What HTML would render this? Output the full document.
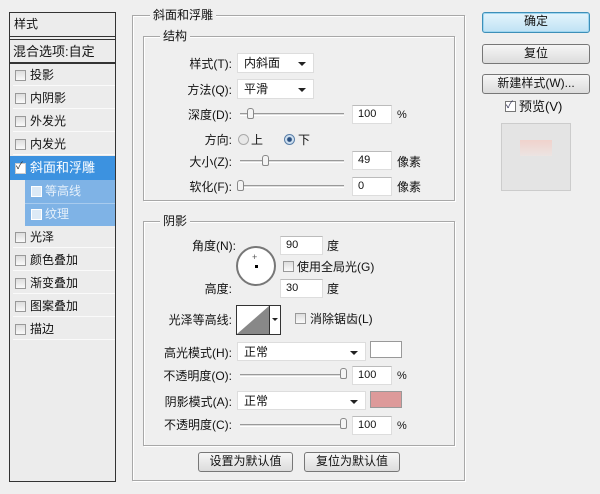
<!DOCTYPE html>
<html><head><meta charset="utf-8"><style>
*{margin:0;padding:0;box-sizing:border-box}
body{width:600px;height:494px;background:#efefef;position:relative;overflow:hidden;font-family:"Liberation Sans","Noto Sans CJK SC",sans-serif;font-size:12px;color:#111}
.a{position:absolute}
.lbl{position:absolute;text-align:right;white-space:nowrap;line-height:14px}
.t{position:absolute;white-space:nowrap;line-height:14px}
.grp{position:absolute;border:1px solid #a8a8a8;box-shadow:inset 1px 1px 0 #fff,1px 1px 0 #fff}
.gt{position:absolute;background:#efefef;padding:0 3px;line-height:14px;font-size:12px}
.dd{position:absolute;background:#fff;border:1px solid #ddd;padding-left:6px;line-height:18px}
.dd:after{content:"";position:absolute;right:7px;top:8px;border:4px solid transparent;border-top:4px solid #222;border-bottom:0}
.inp{position:absolute;background:#fff;border:1px solid #ddd;border-top-color:#bbb;padding-left:5px;line-height:16px;font-size:11px;height:19px}
.trk{position:absolute;height:3px;border-top:1px solid #999;border-bottom:1px solid #fff;background:#ddd}
.th{position:absolute;width:7px;height:11px;background:#f4f4f4;border:1px solid #888;border-radius:3px 3px 2px 2px}
.cb{position:absolute;width:11px;height:11px;border:1px solid #999;background:linear-gradient(#ddd,#fafafa)}
.li{position:absolute;left:13px;height:22px;line-height:22px;width:102px;border-bottom:1px solid #fafafa}
.li .cb{left:2px;top:6px}
.li span{position:absolute;left:17px}
.btn{position:absolute;border:1px solid #777;border-radius:3px;background:linear-gradient(#f6f6f6,#dcdcdc);text-align:center;line-height:17px;font-size:12px}
</style></head><body>
<!-- left panel -->
<div class="a" style="left:9px;top:12px;width:107px;height:470px;border:1px solid #333;background:#ececec"></div>
<div class="t" style="left:14px;top:17px">样式</div>
<div class="a" style="left:10px;top:36px;width:105px;height:4px;border-top:1px solid #333;border-bottom:1px solid #333"></div>
<div class="t" style="left:13px;top:45px;font-size:13px">混合选项:自定</div>
<div class="a" style="left:10px;top:62px;width:105px;border-top:2px solid #333"></div>
<div class="li" style="top:64px"><div class="cb"></div><span>投影</span></div>
<div class="li" style="top:87px"><div class="cb"></div><span>内阴影</span></div>
<div class="li" style="top:110px"><div class="cb"></div><span>外发光</span></div>
<div class="li" style="top:133px"><div class="cb"></div><span>内发光</span></div>
<div class="a" style="left:10px;top:156px;width:105px;height:24px;background:#3c92e0"></div>
<div class="cb" style="left:15px;top:163px;background:#fff;border-color:#ccc"></div>
<div class="t" style="left:16px;top:160px;font-size:10px;color:#333">✓</div>
<div class="t" style="left:30px;top:161px;color:#fff;font-size:13px">斜面和浮雕</div>
<div class="a" style="left:25px;top:180px;width:90px;height:46px;background:#7fb3e6"></div>
<div class="a" style="left:25px;top:203px;width:90px;border-top:1px solid #a8cbee"></div>
<div class="cb" style="left:31px;top:186px;background:#ddeaf6;border-color:#fff"></div>
<div class="t" style="left:45px;top:184px;color:#e6f0fa">等高线</div>
<div class="cb" style="left:31px;top:209px;background:#ddeaf6;border-color:#fff"></div>
<div class="t" style="left:45px;top:207px;color:#e6f0fa">纹理</div>
<div class="li" style="top:226px"><div class="cb"></div><span>光泽</span></div>
<div class="li" style="top:249px"><div class="cb"></div><span>颜色叠加</span></div>
<div class="li" style="top:272px"><div class="cb"></div><span>渐变叠加</span></div>
<div class="li" style="top:295px"><div class="cb"></div><span>图案叠加</span></div>
<div class="li" style="top:318px"><div class="cb"></div><span>描边</span></div>

<!-- main group -->
<div class="grp" style="left:132px;top:15px;width:333px;height:466px"></div>
<div class="gt" style="left:150px;top:8px">斜面和浮雕</div>
<div class="grp" style="left:143px;top:36px;width:312px;height:165px"></div>
<div class="gt" style="left:160px;top:29px">结构</div>

<div class="lbl" style="right:368px;top:57px">样式(T):</div>
<div class="dd" style="left:237px;top:53px;width:77px;height:20px">内斜面</div>
<div class="lbl" style="right:368px;top:83px">方法(Q):</div>
<div class="dd" style="left:237px;top:79px;width:77px;height:20px">平滑</div>
<div class="lbl" style="right:368px;top:108px">深度(D):</div>
<div class="trk" style="left:240px;top:113px;width:104px"></div><div class="th" style="left:247px;top:108px"></div>
<div class="inp" style="left:352px;top:105px;width:40px">100</div><div class="t" style="left:397px;top:108px;font-size:11px">%</div>
<div class="lbl" style="right:368px;top:133px">方向:</div>
<div class="a" style="left:238px;top:134px;width:11px;height:11px;border-radius:50%;border:1px solid #aaa;background:#e8e8e8"></div>
<div class="t" style="left:251px;top:133px">上</div>
<div class="a" style="left:284px;top:134px;width:11px;height:11px;border-radius:50%;border:1px solid #5a7fa8;background:radial-gradient(#2a4f80 30%,#cfe0f0 45%)"></div>
<div class="t" style="left:298px;top:133px">下</div>
<div class="lbl" style="right:368px;top:155px">大小(Z):</div>
<div class="trk" style="left:240px;top:160px;width:104px"></div><div class="th" style="left:262px;top:155px"></div>
<div class="inp" style="left:352px;top:151px;width:40px">49</div><div class="t" style="left:397px;top:155px">像素</div>
<div class="lbl" style="right:368px;top:180px">软化(F):</div>
<div class="trk" style="left:240px;top:185px;width:104px"></div><div class="th" style="left:237px;top:180px"></div>
<div class="inp" style="left:352px;top:177px;width:40px">0</div><div class="t" style="left:397px;top:180px">像素</div>

<div class="grp" style="left:143px;top:221px;width:312px;height:225px"></div>
<div class="gt" style="left:160px;top:214px">阴影</div>
<div class="lbl" style="right:364px;top:239px">角度(N):</div>
<div class="a" style="left:236px;top:246px;width:40px;height:40px;border-radius:50%;border:2px solid #777;background:#fff"></div>
<div class="t" style="left:252px;top:250px;font-size:9px;color:#555">+</div>
<div class="a" style="left:255px;top:265px;width:3px;height:3px;background:#000"></div>
<div class="inp" style="left:280px;top:236px;width:43px">90</div><div class="t" style="left:327px;top:239px">度</div>
<div class="cb" style="left:283px;top:261px"></div><div class="t" style="left:297px;top:260px">使用全局光(G)</div>
<div class="lbl" style="right:368px;top:282px">高度:</div>
<div class="inp" style="left:280px;top:279px;width:43px">30</div><div class="t" style="left:327px;top:282px">度</div>
<div class="lbl" style="right:368px;top:313px">光泽等高线:</div>
<div class="a" style="left:236px;top:305px;width:45px;height:30px;border:1px solid #333;background:#fff"></div>
<svg class="a" style="left:237px;top:306px" width="32" height="28"><polygon points="0,28 32,0 32,28" fill="#888"/></svg>
<div class="a" style="left:269px;top:306px;width:1px;height:28px;background:#333"></div>
<div class="a" style="left:272px;top:318px;border:3px solid transparent;border-top:3px solid #222"></div>
<div class="cb" style="left:295px;top:313px"></div><div class="t" style="left:310px;top:312px">消除锯齿(L)</div>
<div class="lbl" style="right:368px;top:346px">高光模式(H):</div>
<div class="dd" style="left:237px;top:342px;width:129px;height:19px">正常</div>
<div class="a" style="left:370px;top:341px;width:32px;height:17px;border:1px solid #999;background:#fff"></div>
<div class="lbl" style="right:368px;top:369px">不透明度(O):</div>
<div class="trk" style="left:240px;top:374px;width:104px"></div><div class="th" style="left:340px;top:368px"></div>
<div class="inp" style="left:352px;top:366px;width:40px">100</div><div class="t" style="left:397px;top:369px;font-size:11px">%</div>
<div class="lbl" style="right:368px;top:395px">阴影模式(A):</div>
<div class="dd" style="left:237px;top:391px;width:129px;height:19px">正常</div>
<div class="a" style="left:370px;top:391px;width:32px;height:17px;border:1px solid #999;background:#dd9a9a"></div>
<div class="lbl" style="right:368px;top:418px">不透明度(C):</div>
<div class="trk" style="left:240px;top:424px;width:104px"></div><div class="th" style="left:340px;top:418px"></div>
<div class="inp" style="left:352px;top:416px;width:40px">100</div><div class="t" style="left:397px;top:419px;font-size:11px">%</div>

<div class="btn" style="left:198px;top:452px;width:95px;height:20px">设置为默认值</div>
<div class="btn" style="left:304px;top:452px;width:96px;height:20px">复位为默认值</div>

<!-- right -->
<div class="btn" style="left:482px;top:12px;width:108px;height:21px;border-color:#3d8fb8;background:linear-gradient(#e4f4fc,#bfe2f4);box-shadow:inset 0 0 0 1px #9fd6f0">确定</div>
<div class="btn" style="left:482px;top:44px;width:108px;height:20px">复位</div>
<div class="btn" style="left:482px;top:74px;width:108px;height:20px">新建样式(W)...</div>
<div class="cb" style="left:505px;top:101px;background:#fff;border-color:#777"></div>
<div class="t" style="left:506px;top:99px;font-size:10px;color:#335">✓</div>
<div class="t" style="left:519px;top:100px;font-size:13px">预览(V)</div>
<div class="a" style="left:501px;top:123px;width:70px;height:68px;border:1px solid #ccc;background:#e4e4e4"></div>
<div class="a" style="left:520px;top:140px;width:32px;height:16px;background:linear-gradient(#f0d2cc,#ece4e2)"></div>
</body></html>
